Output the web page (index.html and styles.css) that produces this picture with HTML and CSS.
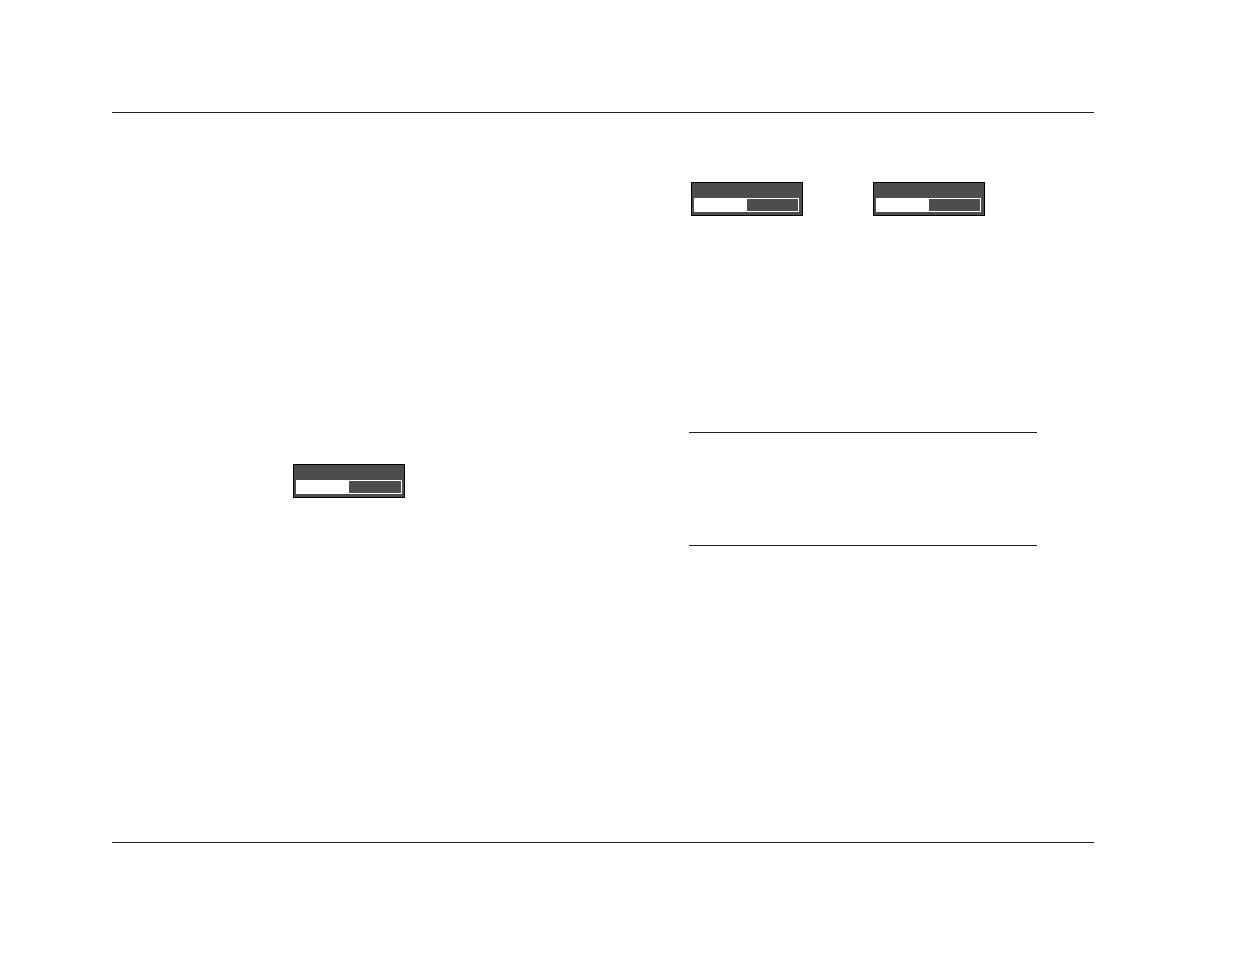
FILE: index.html
```html
<!DOCTYPE html>
<html lang="en">

<head>
    <meta charset="UTF-8">
    <meta name="viewport" content="width=device-width, initial-scale=1.0">
    <title></title>
    <link rel="stylesheet" href="styles.css">
</head>

<body>
    <main class="page">
        <section class="column-left">
            <div class="osd osd-wide">
                <progress class="level" value="50" max="100"></progress>
            </div>
        </section>
        <section class="column-right">
            <div class="osd-row">
                <div class="osd">
                    <progress class="level" value="50" max="100"></progress>
                </div>
                <div class="osd">
                    <progress class="level" value="50" max="100"></progress>
                </div>
            </div>
            <aside class="note"></aside>
        </section>
    </main>
</body>

</html>
```

FILE: styles.css
```css
* {
    box-sizing: border-box;
}

body {
    display: flex;
    min-height: 100vh;
    margin: 0;
    padding: 112px 141px 111px 112px;
    background: #fff;
    font-family: "Liberation Sans", Arial, sans-serif;
}

/* header and footer rules */
.page {
    flex: 1;
    display: grid;
    grid-template-columns: 1fr 348px;
    padding-right: 57px;
    border-top: 1px solid #231f20;
    border-bottom: 1px solid #231f20;
}

.column-left {
    display: flex;
    flex-direction: column;
    align-items: center;
    padding: 351px 103px 0 0;
}

.column-right {
    padding-top: 69px;
}

.osd-row {
    display: flex;
    gap: 70px;
    padding-left: 2px;
}

/* on-screen display box with the level bar */
.osd {
    display: flex;
    align-items: flex-end;
    width: 112px;
    height: 34px;
    padding: 0 3px 3px 2px;
    border: 1px solid #000;
    background: #4d4d4d;
}

.osd-wide {
    padding-right: 2px;
}

.level {
    -webkit-appearance: none;
    appearance: none;
    display: block;
    width: 100%;
    height: 14px;
    border: 1px solid #fff;
    background: #4d4d4d;
}

.level::-webkit-progress-bar {
    background: #4d4d4d;
}

.level::-webkit-progress-value {
    background: #fff;
}

.note {
    height: 114px;
    margin-top: 216px;
    border-top: 1px solid #231f20;
    border-bottom: 1px solid #231f20;
}
```
